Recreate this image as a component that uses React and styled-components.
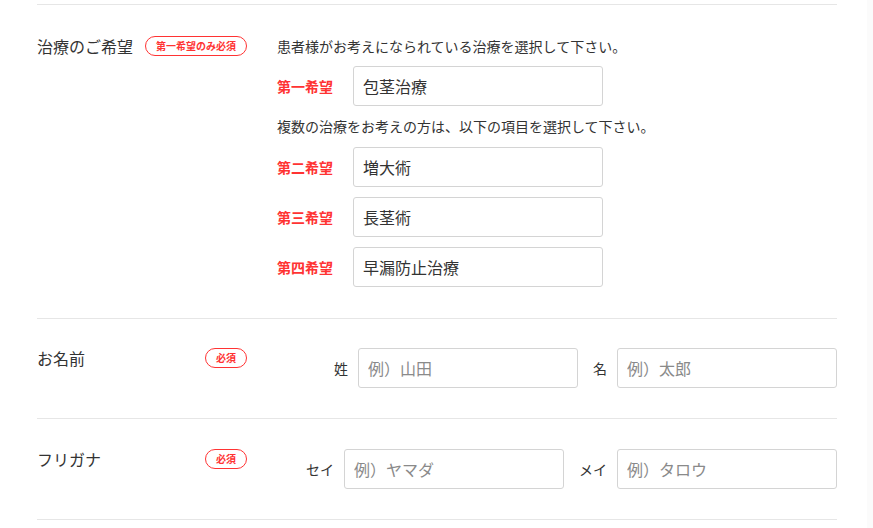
import styled, { createGlobalStyle } from "styled-components";

const GlobalStyle = createGlobalStyle`
  html, body {
    margin: 0;
    padding: 0;
    background-color: #fbfbfb;
  }
  body {
    font-family: "Noto Sans CJK JP", "Noto Sans", sans-serif;
    color: #333;
  }
`;

const choices = [
  { label: "第一希望", value: "包茎治療" },
  { label: "第二希望", value: "増大術" },
  { label: "第三希望", value: "長茎術" },
  { label: "第四希望", value: "早漏防止治療" },
];

export default function App() {
  return (
    <StyledPage>
      <GlobalStyle />
      <StyledRow $pt={31} $pb={31}>
        <StyledHead>
          <StyledLabel>治療のご希望</StyledLabel>
          <StyledBadge>第一希望のみ必須</StyledBadge>
        </StyledHead>
        <StyledBody>
          <StyledNote>患者様がお考えになられている治療を選択して下さい。</StyledNote>
          <StyledChoice>
            <StyledChoiceLabel>{choices[0].label}</StyledChoiceLabel>
            <StyledInput width="250px" defaultValue={choices[0].value} />
          </StyledChoice>
          <StyledNote>複数の治療をお考えの方は、以下の項目を選択して下さい。</StyledNote>
          <StyledChoiceList>
            {choices.slice(1).map((c) => (
              <StyledChoice key={c.label}>
                <StyledChoiceLabel>{c.label}</StyledChoiceLabel>
                <StyledInput width="250px" defaultValue={c.value} />
              </StyledChoice>
            ))}
          </StyledChoiceList>
        </StyledBody>
      </StyledRow>

      <StyledRow $pt={29} $pb={30}>
        <StyledHead>
          <StyledLabel>お名前</StyledLabel>
          <StyledBadge>必須</StyledBadge>
        </StyledHead>
        <StyledPair>
          <StyledField>
            <StyledFieldLabel>姓</StyledFieldLabel>
            <StyledInput width="220px" placeholder="例）山田" />
          </StyledField>
          <StyledField>
            <StyledFieldLabel>名</StyledFieldLabel>
            <StyledInput width="220px" placeholder="例）太郎" />
          </StyledField>
        </StyledPair>
      </StyledRow>

      <StyledRow $pt={30} $pb={30}>
        <StyledHead>
          <StyledLabel>フリガナ</StyledLabel>
          <StyledBadge>必須</StyledBadge>
        </StyledHead>
        <StyledPair>
          <StyledField>
            <StyledFieldLabel>セイ</StyledFieldLabel>
            <StyledInput width="220px" placeholder="例）ヤマダ" />
          </StyledField>
          <StyledField>
            <StyledFieldLabel>メイ</StyledFieldLabel>
            <StyledInput width="220px" placeholder="例）タロウ" />
          </StyledField>
        </StyledPair>
      </StyledRow>
    </StyledPage>
  );
}

const StyledPage = styled.div`
  width: 800px;
  min-height: 528px;
  box-sizing: content-box;
  padding: 4px 30px 0 37px;
  background-color: #fff;
`;

const StyledRow = styled.div`
  display: flex;
  gap: 30px;
  padding: ${(props) => props.$pt}px 0 ${(props) => props.$pb}px;
  border-top: 1px solid #e6e6e6;
  &:last-child {
    border-bottom: 1px solid #e6e6e6;
  }
`;

const StyledHead = styled.div`
  width: 210px;
  flex-shrink: 0;
  display: flex;
  justify-content: space-between;
  align-items: flex-start;
`;

const StyledLabel = styled.div`
  font-size: 16px;
  line-height: 20px;
`;

const StyledBadge = styled.span`
  box-sizing: border-box;
  height: 20px;
  padding: 0 10px;
  border: 1px solid #f33;
  border-radius: 10px;
  color: #f33;
  font-size: 10px;
  font-weight: bold;
  line-height: 18px;
  white-space: nowrap;
`;

const StyledBody = styled.div`
  flex: 1;
  display: flex;
  flex-direction: column;
  gap: 10px;
`;

const StyledNote = styled.p`
  margin: 0;
  font-size: 14px;
  line-height: 20px;
`;

const StyledChoiceList = styled.div`
  display: flex;
  flex-direction: column;
  gap: 10px;
  margin-top: 1px;
`;

const StyledChoice = styled.div`
  display: flex;
  align-items: center;
`;

const StyledChoiceLabel = styled.span`
  width: 76px;
  flex-shrink: 0;
  color: #f33;
  font-size: 14px;
  font-weight: bold;
`;

const StyledInput = styled.input`
  box-sizing: border-box;
  width: ${(props) => props.width};
  height: 40px;
  padding: 0 9px;
  border: 1px solid #d4d4d4;
  border-radius: 3px;
  background: #fff;
  color: #333;
  font-family: inherit;
  font-size: 16px;
  outline: none;
  &::placeholder {
    color: #8a8a8a;
  }
`;

const StyledPair = styled.div`
  flex: 1;
  display: flex;
  justify-content: flex-end;
  align-items: flex-start;
  gap: 15px;
`;

const StyledField = styled.div`
  display: flex;
  align-items: center;
  gap: 10px;
`;

const StyledFieldLabel = styled.span`
  font-size: 14px;
`;
